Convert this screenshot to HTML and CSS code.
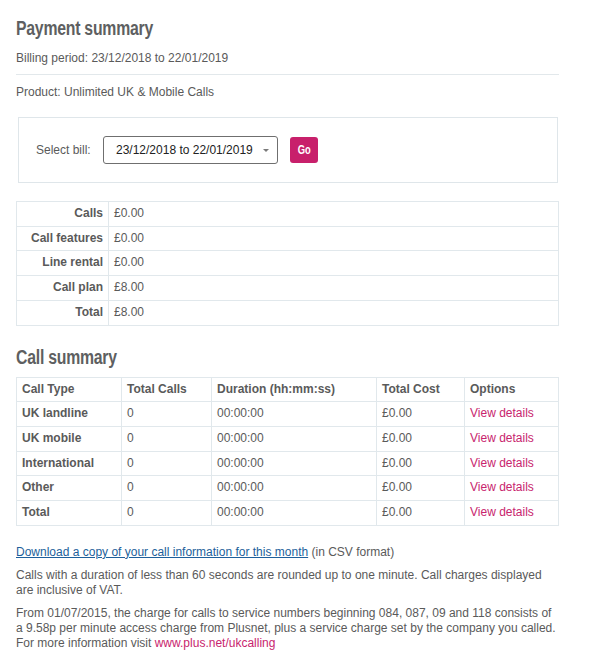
FILE: index.html
```html
<!DOCTYPE html>
<html lang="en">
<head>
<meta charset="utf-8">
<title>Payment summary</title>
<link rel="stylesheet" href="styles.css">
</head>
<body>
<div class="page">
  <h1 class="title"><span class="title-text">Payment summary</span></h1>
  <p class="line first">Billing period: 23/12/2018 to 22/01/2019</p>
  <hr class="rule">
  <p class="line">Product: Unlimited UK &amp; Mobile Calls</p>

  <div class="select-box">
    <span class="select-label">Select bill:</span>
    <div class="select">
      <span class="select-text">23/12/2018 to 22/01/2019</span>
      <span class="select-arrow"></span>
    </div>
    <button class="go" type="button"><span class="go-text">Go</span></button>
  </div>

  <table class="summary">
    <tr><th>Calls</th><td>£0.00</td></tr>
    <tr><th>Call features</th><td>£0.00</td></tr>
    <tr><th>Line rental</th><td>£0.00</td></tr>
    <tr><th>Call plan</th><td>£8.00</td></tr>
    <tr><th>Total</th><td>£8.00</td></tr>
  </table>

  <h2 class="title sub"><span class="title-text">Call summary</span></h2>
  <table class="calls">
    <thead>
      <tr><th class="c1">Call Type</th><th class="c2">Total Calls</th><th class="c3">Duration (hh:mm:ss)</th><th class="c4">Total Cost</th><th class="c5">Options</th></tr>
    </thead>
    <tbody>
      <tr><th>UK landline</th><td>0</td><td>00:00:00</td><td>£0.00</td><td><a class="pink" href="#">View details</a></td></tr>
      <tr><th>UK mobile</th><td>0</td><td>00:00:00</td><td>£0.00</td><td><a class="pink" href="#">View details</a></td></tr>
      <tr><th>International</th><td>0</td><td>00:00:00</td><td>£0.00</td><td><a class="pink" href="#">View details</a></td></tr>
      <tr><th>Other</th><td>0</td><td>00:00:00</td><td>£0.00</td><td><a class="pink" href="#">View details</a></td></tr>
      <tr><th>Total</th><td>0</td><td>00:00:00</td><td>£0.00</td><td><a class="pink" href="#">View details</a></td></tr>
    </tbody>
  </table>

  <p class="text download"><a class="blue" href="#">Download a copy of your call information for this month</a> (in CSV format)</p>
  <p class="text">Calls with a duration of less than 60 seconds are rounded up to one minute. Call charges displayed are inclusive of VAT.</p>
  <p class="text">From 01/07/2015, the charge for calls to service numbers beginning 084, 087, 09 and 118 consists of a 9.58p per minute access charge from Plusnet, plus a service charge set by the company you called. For more information visit <a class="pink" href="#">www.plus.net/ukcalling</a></p>
</div>
</body>
</html>
```

FILE: styles.css
```css
html, body {
  margin: 0;
  padding: 0;
  background: #ffffff;
}

body {
  font-family: "Liberation Sans", Arial, sans-serif;
  font-size: 12px;
  color: #5a5a5a;
}

.page {
  width: 543px;
  padding: 16px 30px 0 16px;
}

.title {
  font-family: "Liberation Sans", Arial, sans-serif;
  font-weight: bold;
  font-size: 20px;
  line-height: 24px;
  color: #5e5f61;
  margin: 0;
}

.title-text {
  display: inline-block;
  transform: scaleX(0.79);
  transform-origin: left center;
  letter-spacing: -0.3px;
}

.line {
  margin: 0;
  line-height: 15px;
}

.first {
  margin-top: 11px;
}

.rule {
  border: 0;
  height: 1px;
  background: #e2e8eb;
  margin: 8px 0 10px;
}

.select-box {
  margin: 17px 1px 0 2px;
  border: 1px solid #dfe6ea;
  padding: 18px 17px;
  display: flex;
  align-items: center;
}

.select-label {
  width: 67px;
  line-height: 15px;
}

.select {
  box-sizing: border-box;
  width: 175px;
  height: 28px;
  border: 1px solid #6f6f6f;
  border-radius: 3px;
  display: flex;
  align-items: center;
  padding: 0 0 0 12px;
  color: #222222;
}

.select-text {
  flex: 1;
  line-height: 15px;
}

.select-arrow {
  width: 0;
  height: 0;
  border-left: 3.5px solid transparent;
  border-right: 3.5px solid transparent;
  border-top: 3.5px solid #7a7a7a;
  margin-right: 8px;
}

.go {
  margin-left: 12px;
  width: 28px;
  height: 26px;
  border: 0;
  border-radius: 3px;
  background: #c8206b;
  color: #ffffff;
  font-family: "Liberation Sans", Arial, sans-serif;
  font-weight: bold;
  font-size: 12px;
  padding: 0;
}

.go-text {
  display: inline-block;
  transform: scaleX(0.78);
}

table {
  border-collapse: collapse;
  width: 543px;
}

th, td {
  border: 1px solid #e1e8ec;
  padding: 4px 5px;
  line-height: 15.7px;
  text-align: left;
  font-weight: normal;
  vertical-align: middle;
}

th {
  font-weight: bold;
}

.summary {
  margin-top: 18px;
}

.summary th {
  width: 81px;
  text-align: right;
}

.sub {
  margin-top: 19px;
}

.calls {
  margin-top: 8px;
}

.calls .c1 { width: 94px; }
.calls .c2 { width: 79px; }
.calls .c3 { width: 154px; }
.calls .c4 { width: 77px; }

.pink {
  color: #c8246e;
  text-decoration: none;
}

.text {
  margin: 8px 0 0;
  line-height: 15px;
}

.download {
  margin-top: 19px;
}

.blue {
  color: #1d5f9b;
  text-decoration: underline;
}
```
